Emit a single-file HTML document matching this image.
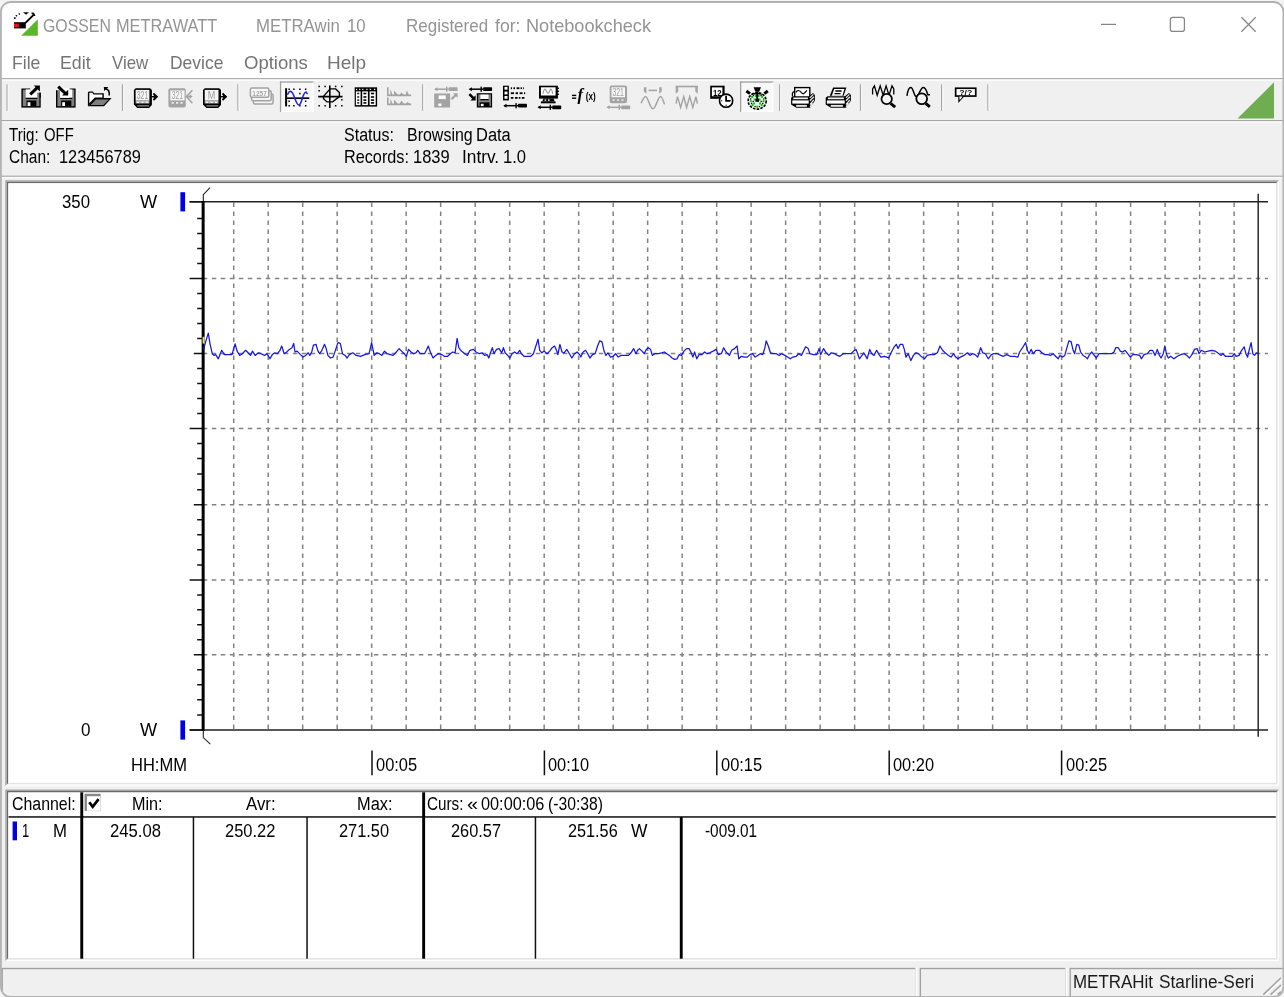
<!DOCTYPE html>
<html lang="en"><head><meta charset="utf-8"><title>GOSSEN METRAWATT METRAwin 10</title>
<style>
html,body{margin:0;padding:0}
body{width:1284px;height:997px;overflow:hidden;background:#f3f3f3;position:relative;font-family:"Liberation Sans",sans-serif}
.win{position:absolute;left:0;top:0;width:1284px;height:997px;overflow:hidden}
svg{display:block}
.abs{position:absolute}
span.t,span.ti,span.mn,span.sb{position:absolute;white-space:pre;line-height:1;transform-origin:0 0;font-family:"Liberation Sans",sans-serif}
.hl{position:absolute;height:0;left:0}
</style></head><body>
<div class="win">
<svg class="abs" style="left:0;top:0" width="1284" height="997" viewBox="0 0 1284 997">
<defs><clipPath id="wc"><rect x="0.5" y="1.5" width="1283.4" height="995.8" rx="10"/></clipPath></defs>
<g clip-path="url(#wc)">
<rect x="0" y="0" width="1284" height="997" fill="#f0f0f0"/>
<rect x="0" y="0" width="1284" height="78" fill="#fff"/>
<rect x="0" y="78.1" width="1284" height="1.3" fill="#a6a6a6"/>
<rect x="0" y="79.4" width="1284" height="1.3" fill="#fff"/>
<rect x="0" y="120.0" width="1284" height="1.3" fill="#a6a6a6"/>
<rect x="0" y="121.3" width="1284" height="1.3" fill="#fbfbfb"/>
<rect x="0" y="175.6" width="1284" height="1.3" fill="#acacac"/>
<rect x="0" y="176.9" width="1284" height="1.4" fill="#fafafa"/>
<rect x="5.3" y="180.2" width="1273.7" height="605.7" fill="#ffffff"/><path d="M5.3 180.2H1279.0L1277.5 181.7H6.8V784.4000000000001L5.3 785.9000000000001Z" fill="#a0a0a0"/><rect x="6.8" y="181.7" width="1270.7" height="602.7" fill="#e3e3e3"/><path d="M6.8 181.7H1277.5L1276.0 183.2H8.3V782.9000000000001L6.8 784.4000000000001Z" fill="#696969"/><rect x="8.3" y="183.2" width="1267.7" height="599.7" fill="#fff"/>
<rect x="5.3" y="789.4" width="1273.7" height="171.7" fill="#ffffff"/><path d="M5.3 789.4H1279.0L1277.5 790.9H6.8V959.5999999999999L5.3 961.0999999999999Z" fill="#a0a0a0"/><rect x="6.8" y="790.9" width="1270.7" height="168.7" fill="#e3e3e3"/><path d="M6.8 790.9H1277.5L1276.0 792.4H8.3V958.0999999999999L6.8 959.5999999999999Z" fill="#696969"/><rect x="8.3" y="792.4" width="1267.7" height="165.7" fill="#fff"/>
<rect x="8.5" y="816.1" width="1267.3" height="1.7" fill="#2c2c2c"/>
<rect x="80.3" y="792.3" width="2.9" height="166.4" fill="#000"/>
<rect x="422.2" y="792.3" width="2.9" height="166.4" fill="#000"/>
<rect x="679.8" y="817" width="2.9" height="141.7" fill="#000"/>
<rect x="192.7" y="817" width="1.5" height="141.7" fill="#111"/>
<rect x="306.3" y="817" width="1.5" height="141.7" fill="#111"/>
<rect x="534.7" y="817" width="1.5" height="141.7" fill="#111"/>
<rect x="12.6" y="821.5" width="4.4" height="18.8" fill="#0000e6"/>
<rect x="84.6" y="793.8" width="16.4" height="17.8" fill="#f1f1f1"/>
<rect x="84.6" y="793.8" width="16.0" height="17.0" fill="#868686"/>
<rect x="86.9" y="796.2" width="13.7" height="14.6" fill="#fff"/>
<path d="M89.3 802.2L92.7 806.8L98.6 799.2" stroke="#000" stroke-width="2.7" fill="none"/>
<rect x="1.5" y="967.8" width="915.5" height="30" fill="#fff"/><rect x="1.5" y="967.8" width="913.9" height="30" fill="#a0a0a0"/><rect x="2.9" y="969.2" width="912.5" height="30" fill="#f0f0f0"/>
<rect x="919.6" y="967.8" width="147.5" height="30" fill="#fff"/><rect x="919.6" y="967.8" width="145.9" height="30" fill="#a0a0a0"/><rect x="921.0" y="969.2" width="144.5" height="30" fill="#f0f0f0"/>
<rect x="1069.5" y="967.8" width="230" height="30" fill="#fff"/><rect x="1069.5" y="967.8" width="228.4" height="30" fill="#a0a0a0"/><rect x="1070.9" y="969.2" width="227.0" height="30" fill="#f0f0f0"/>
<path d="M1265.6 994.6L1283.2 977.8M1272.8 994.6L1283.2 985.2" stroke="#fff" stroke-width="1.6" fill="none"/>
<path d="M1263.3 994.6L1281 977.8M1270.5 994.6L1281 985.2M1277.6 994.6L1281 991.6" stroke="#a4a4a4" stroke-width="1.6" fill="none"/>
<path d="M1274 82.2V118.5H1237.5Z" fill="#70ad50"/>
</g>
<rect x="0.95" y="2.0" width="1282.45" height="994.8" rx="9.5" fill="none" stroke="#b2b2b2" stroke-width="1.8"/>
</svg>
<svg class="abs" style="left:8px;top:6px" width="40" height="36" viewBox="8 6 40 36">
<path d="M37.8 19.2V35.8H21.2Z" fill="#5cb62c"/>
<rect x="14" y="22.2" width="11.8" height="6.2" fill="#000"/>
<rect x="14" y="23.6" width="4.8" height="3.8" fill="#e8101c"/>
<path d="M25.2 23.2L33.6 14.8" stroke="#000" stroke-width="1.9" fill="none"/>
<path d="M31.6 13.2L35 15.8L33.6 12.9Z" fill="#000" stroke="#000" stroke-width="0.9"/>
<path d="M23 12.2H29L26 14.8Z" fill="#000"/>
<path d="M14.8 19V17.2M15.9 16.2L16.9 15.2M18.8 14.3L19.8 13.6" stroke="#000" stroke-width="1.5" fill="none"/>
</svg>
<svg class="abs" style="left:1090px;top:8px" width="180" height="32" viewBox="1090 8 180 32" fill="none" stroke="#868686" stroke-width="1.25">
<path d="M1101 24.4H1116"/>
<rect x="1170.4" y="17.4" width="14" height="14" rx="2.2"/>
<path d="M1241.4 17.3L1255.7 31.7M1255.7 17.3L1241.4 31.7"/>
</svg>
<svg class="abs" style="left:0;top:78px;will-change:transform" width="1000" height="44" viewBox="0 78 1000 44" font-family="Liberation Sans, sans-serif">
<rect x="6.5" y="84.3" width="1.2" height="26.5" fill="#a4a4a4"/><rect x="7.7" y="84.3" width="1.2" height="26.5" fill="#f8f8f8"/>
<rect x="121.9" y="84.3" width="1.2" height="26.5" fill="#a4a4a4"/><rect x="123.1" y="84.3" width="1.2" height="26.5" fill="#f8f8f8"/>
<rect x="237.3" y="84.3" width="1.2" height="26.5" fill="#a4a4a4"/><rect x="238.5" y="84.3" width="1.2" height="26.5" fill="#f8f8f8"/>
<rect x="422.1" y="84.3" width="1.2" height="26.5" fill="#a4a4a4"/><rect x="423.3" y="84.3" width="1.2" height="26.5" fill="#f8f8f8"/>
<rect x="779.0" y="84.3" width="1.2" height="26.5" fill="#a4a4a4"/><rect x="780.2" y="84.3" width="1.2" height="26.5" fill="#f8f8f8"/>
<rect x="859.9" y="84.3" width="1.2" height="26.5" fill="#a4a4a4"/><rect x="861.1" y="84.3" width="1.2" height="26.5" fill="#f8f8f8"/>
<rect x="941.0" y="84.3" width="1.2" height="26.5" fill="#a4a4a4"/><rect x="942.2" y="84.3" width="1.2" height="26.5" fill="#f8f8f8"/>
<rect x="987.3" y="84.3" width="1.2" height="26.5" fill="#a4a4a4"/><rect x="988.5" y="84.3" width="1.2" height="26.5" fill="#f8f8f8"/>
<rect x="279.9" y="81.4" width="33.6" height="30.6" fill="#f8f8f8"/><rect x="279.9" y="81.4" width="33.6" height="1.3" fill="#a0a0a0"/><rect x="279.9" y="81.4" width="1.3" height="30.6" fill="#a0a0a0"/><rect x="281.2" y="110.7" width="32.3" height="1.3" fill="#fff"/><rect x="312.2" y="82.7" width="1.3" height="29.3" fill="#fff"/>
<rect x="740.0" y="81.4" width="33.2" height="30.6" fill="#f8f8f8"/><rect x="740.0" y="81.4" width="33.2" height="1.3" fill="#a0a0a0"/><rect x="740.0" y="81.4" width="1.3" height="30.6" fill="#a0a0a0"/><rect x="741.3" y="110.7" width="31.9" height="1.3" fill="#fff"/><rect x="771.9" y="82.7" width="1.3" height="29.3" fill="#fff"/>
<rect x="21.4" y="88.5" width="19.3" height="19.1" fill="#000"/><rect x="22.8" y="89.7" width="16.6" height="16.5" fill="#808080"/><rect x="25.7" y="89.4" width="11.7" height="8.4" fill="#fff"/><rect x="25.7" y="97.8" width="11.7" height="1.2" fill="#000"/><rect x="26.5" y="100.5" width="9.9" height="6.0" fill="#000"/><rect x="27.6" y="102.2" width="2.8" height="3.8" fill="#fff"/>
<rect x="30.2" y="87.5" width="11.3" height="5.3" fill="#f0f0f0"/>
<rect x="37.6" y="92.8" width="1.8" height="5.2" fill="#808080"/><rect x="39.4" y="92.6" width="1.3" height="5.4" fill="#000"/>
<path d="M30.2 94.4L37.6 87.4" stroke="#000" stroke-width="3.0" fill="none" />
<path d="M33.8 85.4H39.9V91.6Z" fill="#000"/>
<rect x="56.0" y="88.5" width="19.6" height="19.1" fill="#000"/><rect x="57.4" y="89.7" width="16.9" height="16.5" fill="#808080"/><rect x="60.3" y="89.4" width="12.0" height="8.4" fill="#fff"/><rect x="60.3" y="97.8" width="12.0" height="1.2" fill="#000"/><rect x="61.1" y="100.5" width="10.2" height="6.0" fill="#000"/><rect x="62.2" y="102.2" width="2.8" height="3.8" fill="#fff"/>
<rect x="55.0" y="87.5" width="14.4" height="2.7" fill="#f0f0f0"/>
<rect x="60.2" y="88.0" width="9.2" height="9.8" fill="#fff"/>
<path d="M58.2 86.6L65.6 93.6" stroke="#000" stroke-width="3.0" fill="none" />
<path d="M68.2 89.8V95.6H62.0Z" fill="#000"/>
<path d="M87.9 106V92.4L89 91.4H93L94 93.2H103.8V98.5H95.4L88.4 106Z" fill="#000"/>
<path d="M89.3 103.2V93L89.6 92.8H92.4L93.4 94.6H102.4V97.4H94.8Z" fill="#fff"/>
<path d="M95.4 98.1H111.6L104 106.3H88Z" fill="#000"/>
<path d="M96 99.4H108.8L103.4 105.1H90.6Z" fill="#808080"/>
<path d="M109.2 95.6V92.4Q108.6 89.4 105.6 88.8" stroke="#000" stroke-width="1.5" fill="none" />
<path d="M103.8 87.0H108.4L104.2 91Z" fill="#000"/>
<path d="M135.70000000000002 88.2H150.1L151.9 90.0V105.10000000000001L149.1 107.9H137.3L133.9 104.50000000000001V90.0Z" fill="#000"/><rect x="135.6" y="89.9" width="13.8" height="10.8" fill="#f4f4f4"/><rect x="135.6" y="100.8" width="13.8" height="2.7" fill="#b4b4b4"/><rect x="136.9" y="101.7" width="2.0" height="1.2" fill="#fff"/><rect x="141.5" y="101.7" width="2.0" height="1.2" fill="#fff"/><rect x="145.9" y="101.7" width="2.0" height="1.2" fill="#fff"/><rect x="137.3" y="105.3" width="11.8" height="1.2" fill="#989898"/><text x="142.5" y="98.8" font-size="10.5" fill="#9c9c9c" text-anchor="middle" textLength="11.5" lengthAdjust="spacingAndGlyphs">321</text>
<path d="M151.7 96.7H156.2" stroke="#000" stroke-width="1.4" fill="none" /><path d="M154.0 92.7L158.2 96.7L154.0 100.7L152.79999999999998 99.5L155.2 96.7L152.79999999999998 93.9Z" fill="#000"/><path d="M153.79999999999998 94.10000000000001L157.6 96.7L153.79999999999998 99.3Z" fill="#000"/>
<rect x="168.4" y="88.2" width="17.4" height="19.3" rx="2.0" fill="#a3a3a3"/><rect x="170.3" y="90.4" width="14.3" height="10.0" fill="#f6f6f6"/><rect x="171.6" y="102.2" width="2.2" height="1.4" fill="#fff"/><rect x="176.0" y="102.2" width="2.2" height="1.4" fill="#fff"/><rect x="180.4" y="102.2" width="2.2" height="1.4" fill="#fff"/><text x="177.4" y="99.2" font-size="10.5" fill="#a0a0a0" text-anchor="middle" textLength="11.5" lengthAdjust="spacingAndGlyphs">321</text>
<path d="M192.4 90.2L186.4 96.6L192.4 103.2M186 96.6H191" stroke="#a3a3a3" stroke-width="1.5" fill="none" />
<path d="M189.6 94.2L192.6 96.6L189.6 99Z" fill="#a3a3a3"/>
<path d="M204.8 88.2H219.2L221.0 90.0V105.10000000000001L218.2 107.9H206.4L203.0 104.50000000000001V90.0Z" fill="#000"/><rect x="204.7" y="89.9" width="13.8" height="10.8" fill="#f4f4f4"/><rect x="204.7" y="100.8" width="13.8" height="2.7" fill="#b4b4b4"/><rect x="206.0" y="101.7" width="2.0" height="1.2" fill="#fff"/><rect x="210.6" y="101.7" width="2.0" height="1.2" fill="#fff"/><rect x="215.0" y="101.7" width="2.0" height="1.2" fill="#fff"/><rect x="206.4" y="105.3" width="11.8" height="1.2" fill="#989898"/><text x="211.6" y="98.8" font-size="10.5" fill="#9c9c9c" text-anchor="middle" textLength="7.5" lengthAdjust="spacingAndGlyphs">M</text>
<path d="M220.8 96.7H225.3" stroke="#000" stroke-width="1.4" fill="none" /><path d="M223.10000000000002 92.7L227.3 96.7L223.10000000000002 100.7L221.9 99.5L224.3 96.7L221.9 93.9Z" fill="#000"/><path d="M222.9 94.10000000000001L226.70000000000002 96.7L222.9 99.3Z" fill="#000"/>
<rect x="253.5" y="94.1" width="19.6" height="10" rx="1.5" fill="#f4f4f4" stroke="#a3a3a3" stroke-width="1.5"/>
<rect x="251.6" y="90.7" width="19.6" height="10" rx="1.5" fill="#f4f4f4" stroke="#a3a3a3" stroke-width="1.5"/>
<rect x="250.4" y="88" width="18.4" height="9.3" rx="1.5" fill="#f8f8f8" stroke="#a3a3a3" stroke-width="1.5"/>
<text x="259.6" y="95.6" font-size="8" fill="#a8a8a8" text-anchor="middle" textLength="14.6" lengthAdjust="spacingAndGlyphs" font-weight="bold">1257</text>
<rect x="288.4" y="88.5" width="1.5" height="1.5" fill="#000"/><rect x="293.1" y="88.5" width="1.5" height="1.5" fill="#000"/><rect x="299.1" y="88.5" width="1.5" height="1.5" fill="#000"/><rect x="304.9" y="88.5" width="1.5" height="1.5" fill="#000"/><rect x="299.1" y="92.8" width="1.5" height="1.5" fill="#000"/><rect x="288.4" y="100.5" width="1.5" height="1.5" fill="#000"/><rect x="304.9" y="100.5" width="1.5" height="1.5" fill="#000"/><rect x="288.4" y="105.0" width="1.5" height="1.5" fill="#000"/><rect x="293.1" y="105.0" width="1.5" height="1.5" fill="#000"/><rect x="299.1" y="105.0" width="1.5" height="1.5" fill="#000"/><rect x="304.9" y="105.0" width="1.5" height="1.5" fill="#000"/>
<path d="M286.1 88.2V106.4" stroke="#000" stroke-width="2.0" fill="none" /><path d="M286 98.2H309.3" stroke="#000" stroke-width="1.7" fill="none" />
<path d="M287.4 94.8Q289 91.2 290.6 91.3Q292.4 91.6 294.8 98.2Q297.2 104.9 298.9 105Q300.6 104.8 302.3 98.2Q304.4 92 306 92L307.6 93.9" stroke="#2020dd" stroke-width="1.5" fill="none" />
<rect x="318.4" y="85.7" width="1.5" height="1.5" fill="#000"/><rect x="324.4" y="85.7" width="1.5" height="1.5" fill="#000"/><rect x="334.9" y="85.7" width="1.5" height="1.5" fill="#000"/><rect x="341.1" y="85.7" width="1.5" height="1.5" fill="#000"/><rect x="318.4" y="90.0" width="1.5" height="1.5" fill="#000"/><rect x="341.1" y="99.0" width="1.5" height="1.5" fill="#000"/><rect x="318.4" y="105.0" width="1.5" height="1.5" fill="#000"/><rect x="324.4" y="105.0" width="1.5" height="1.5" fill="#000"/><rect x="334.9" y="105.0" width="1.5" height="1.5" fill="#000"/><rect x="341.1" y="105.0" width="1.5" height="1.5" fill="#000"/>
<path d="M318.2 96.6H342.5M329.8 85.4V107.9" stroke="#000" stroke-width="1.6" fill="none" />
<path d="M323.5 96.4L330.1 88.9H335.7L339.4 92.6V96.6L332.6 101.9H327L323.5 98.8Z" stroke="#000" stroke-width="1.35" fill="none" />
<rect x="354.7" y="87.3" width="22.4" height="19.3" fill="#000"/>
<rect x="355.9" y="91.4" width="4.7" height="13.7" fill="#fff"/>
<rect x="362.2" y="91.4" width="5.7" height="13.7" fill="#fff"/>
<rect x="369.6" y="91.4" width="6.1" height="13.7" fill="#fff"/>
<rect x="356.0" y="88.8" width="1.2" height="1.2" fill="#fff"/><rect x="359.1" y="88.8" width="1.2" height="1.2" fill="#fff"/><rect x="362.2" y="88.8" width="1.2" height="1.2" fill="#fff"/><rect x="366.3" y="88.8" width="1.2" height="1.2" fill="#fff"/><rect x="369.7" y="88.8" width="1.2" height="1.2" fill="#fff"/><rect x="374.1" y="88.8" width="1.2" height="1.2" fill="#fff"/>
<rect x="357.2" y="92.8" width="2.0" height="1.4" fill="#000"/><rect x="363.4" y="92.7" width="3.0" height="1.6" fill="#000"/><rect x="370.9" y="92.7" width="3.2" height="1.6" fill="#000"/>
<rect x="357.2" y="96.3" width="2.0" height="1.4" fill="#000"/><rect x="363.4" y="96.2" width="3.0" height="1.6" fill="#000"/><rect x="370.9" y="96.2" width="3.2" height="1.6" fill="#000"/>
<rect x="357.2" y="99.4" width="2.0" height="1.4" fill="#000"/><rect x="363.4" y="99.3" width="3.0" height="1.6" fill="#000"/><rect x="370.9" y="99.3" width="3.2" height="1.6" fill="#000"/>
<rect x="357.2" y="102.2" width="2.0" height="1.4" fill="#000"/><rect x="363.4" y="102.1" width="3.0" height="1.6" fill="#000"/><rect x="370.9" y="102.1" width="3.2" height="1.6" fill="#000"/>
<path d="M387.8 87.3V95.4H411.2M387.8 97.6V104.4H411.2" stroke="#a3a3a3" stroke-width="1.6" fill="none" />
<path d="M390.4 95V89L392.6 95ZM394 95V90.4L398 95ZM399.6 95L401.4 92.6L404 95ZM405.6 95L406.8 90.4L409 95Z" fill="#a3a3a3"/>
<path d="M390.4 104V98.6L392.6 104ZM394 104V99.6L398 104ZM399.6 104L401.4 100.6L404 104ZM405.4 104L407.4 102L410 104Z" fill="#a3a3a3"/>
<path d="M435.2 89.2H448.6" stroke="#a3a3a3" stroke-width="1.5" fill="none" /><path d="M434.2 89.2L437.4 87.2V91.2Z" fill="#a3a3a3"/><rect x="446.0" y="86.6" width="1.4" height="5.2" fill="#a3a3a3"/><rect x="448.6" y="87.3" width="9.0" height="3.8" rx="0.8" fill="#a3a3a3"/>
<rect x="434.2" y="93.5" width="15.9" height="14.0" fill="#a3a3a3"/>
<rect x="438.6" y="95.4" width="7.1" height="3.7" fill="#fff"/><rect x="438.3" y="103.5" width="3.1" height="2.5" fill="#fff"/>
<path d="M451.4 99.2L456 94.8" stroke="#a3a3a3" stroke-width="2.2" fill="none" /><path d="M453 93.2H457.6V97.8Z" fill="#a3a3a3"/>
<path d="M469.7 89.2H483.1" stroke="#000" stroke-width="1.5" fill="none" /><path d="M468.7 89.2L471.9 87.2V91.2Z" fill="#000"/><rect x="480.5" y="86.6" width="1.4" height="5.2" fill="#000"/><rect x="483.1" y="87.3" width="9.0" height="3.8" rx="0.8" fill="#000"/>
<rect x="476.8" y="93.2" width="15.3" height="14.3" fill="#000"/><rect x="478.2" y="94.4" width="12.7" height="11.8" fill="#808080"/>
<rect x="480.4" y="94.6" width="8.1" height="4.4" fill="#fff"/><rect x="480.4" y="99.0" width="8.1" height="1.2" fill="#000"/>
<rect x="479.6" y="102.4" width="9.8" height="4.2" fill="#000"/><rect x="480.8" y="103.8" width="2.8" height="2.3" fill="#fff"/>
<path d="M469.4 94.2L473.6 98.4" stroke="#000" stroke-width="2.6" fill="none" /><path d="M475.6 95.2V100.4H470.4Z" fill="#000"/>
<rect x="503.0" y="85.7" width="5.9" height="14.7" fill="#000"/>
<rect x="504.5" y="86.9" width="3.0" height="2.8" fill="#fff"/>
<rect x="504.5" y="91.6" width="3.0" height="2.8" fill="#fff"/>
<rect x="504.5" y="96.0" width="3.0" height="2.8" fill="#fff"/>
<rect x="510.8" y="87.3" width="1.2" height="1.8" fill="#000"/>
<rect x="513.4" y="87.3" width="1.6" height="1.8" fill="#000"/>
<rect x="516.6" y="87.3" width="2.8" height="1.8" fill="#000"/>
<rect x="520.6" y="87.3" width="1.4" height="1.8" fill="#000"/>
<rect x="523.2" y="87.3" width="0.8" height="1.8" fill="#000"/>
<rect x="510.8" y="92.3" width="3.2" height="1.8" fill="#000"/>
<rect x="515.6" y="92.3" width="2.4" height="1.8" fill="#000"/>
<rect x="519.6" y="92.3" width="3.0" height="1.8" fill="#000"/>
<rect x="524.0" y="92.3" width="1.2" height="1.8" fill="#000"/>
<rect x="510.8" y="97.0" width="2.6" height="1.8" fill="#000"/>
<rect x="515.0" y="97.0" width="2.6" height="1.8" fill="#000"/>
<rect x="518.8" y="97.0" width="1.6" height="1.8" fill="#000"/>
<rect x="521.8" y="97.0" width="2.6" height="1.8" fill="#000"/>
<path d="M504.3 105.7H518.0" stroke="#000" stroke-width="1.5" fill="none" /><path d="M503.3 105.7L506.5 103.7V107.7Z" fill="#000"/><rect x="515.4" y="103.1" width="1.4" height="5.2" fill="#000"/><rect x="518.0" y="103.8" width="9.0" height="3.8" rx="0.8" fill="#000"/>
<rect x="539.0" y="85.7" width="18.9" height="12.9" fill="#000"/>
<rect x="540.9" y="87.3" width="14.7" height="8.2" fill="#fff"/>
<path d="M543 93.6Q544.6 86 546.4 91T549.6 91T552.8 93.8" stroke="#9a9a9a" stroke-width="1.1" fill="none" />
<rect x="557.9" y="87.6" width="1.0" height="1.4" fill="#000"/><rect x="557.9" y="90.6" width="1.0" height="1.4" fill="#000"/><rect x="557.9" y="93.6" width="1.0" height="1.4" fill="#000"/>
<path d="M543.4 98.6H553.6L554.6 101.4H542.4Z" fill="#000"/><rect x="540.9" y="101.4" width="14.7" height="1.9" fill="#000"/>
<rect x="544.6" y="99.4" width="1.6" height="1.4" fill="#fff"/><rect x="548.0" y="99.4" width="1.6" height="1.4" fill="#fff"/>
<path d="M538.5 107.3H552.2" stroke="#000" stroke-width="1.5" fill="none" /><path d="M537.5 107.3L540.7 105.3V109.3Z" fill="#000"/><rect x="549.6" y="104.7" width="1.4" height="5.2" fill="#000"/><rect x="552.2" y="105.4" width="9.0" height="3.8" rx="0.8" fill="#000"/>
<rect x="572.0" y="94.7" width="4.2" height="1.4" fill="#000"/><rect x="572.0" y="97.5" width="4.2" height="1.4" fill="#000"/>
<text x="577.6" y="99.8" font-size="16.5" fill="#000" style="font-family:'Liberation Serif',serif;font-style:italic;font-weight:bold">f</text>
<text x="585.8" y="100.4" font-size="10.5" fill="#000" textLength="10" lengthAdjust="spacingAndGlyphs" font-weight="bold">(x)</text>
<rect x="609.7" y="85.4" width="17.4" height="17.8" rx="2.2" fill="#a3a3a3"/>
<rect x="611.5" y="87.3" width="13.5" height="10.0" fill="#f6f6f6"/>
<text x="618.2" y="96.0" font-size="10.5" fill="#a0a0a0" text-anchor="middle" textLength="11.5" lengthAdjust="spacingAndGlyphs">321</text>
<rect x="612.6" y="99.4" width="2.0" height="1.3" fill="#fff"/><rect x="617.0" y="99.4" width="2.0" height="1.3" fill="#fff"/><rect x="621.4" y="99.4" width="2.0" height="1.3" fill="#fff"/>
<path d="M607.5 107.3H621.2" stroke="#a3a3a3" stroke-width="1.5" fill="none" /><path d="M606.5 107.3L609.7 105.3V109.3Z" fill="#a3a3a3"/><rect x="618.6" y="104.7" width="1.4" height="5.2" fill="#a3a3a3"/><rect x="621.2" y="105.4" width="9.0" height="3.8" rx="0.8" fill="#a3a3a3"/>
<path d="M643.9 87.3H646.4V93.8L643.9 91.6ZM659.2 87.3H661.7V91.6L659.2 93.8Z" fill="#a3a3a3"/>
<path d="M648.6 90.4H657" stroke="#a3a3a3" stroke-width="1.5" fill="none" />
<path d="M641.1 103.2C643 99 644 96.4 645.5 96.4C648 96.4 650 108.8 652.9 108.8C655.8 108.8 658 96.4 660.5 96.4C662 96.4 663.2 100 664.5 104.4" stroke="#a3a3a3" stroke-width="1.5" fill="none" />
<path d="M675.7 86.5H697.8" stroke="#a3a3a3" stroke-width="1.6" fill="none" /><path d="M675.7 86H678.2V91.6L675.7 93.8ZM695.3 86H697.8V93.8L695.3 91.6Z" fill="#a3a3a3"/>
<path d="M676 103.6L677.5 96.6L680.6 107.5L683.8 96.6L686.6 107.5L689.7 96.6L692.8 107.5L695.9 96.6L697.4 103.6" stroke="#a3a3a3" stroke-width="1.4" fill="none" />
<rect x="710.2" y="85.7" width="14.4" height="13.1" fill="#000"/>
<rect x="711.9" y="87.4" width="10.5" height="8.8" fill="#fff"/>
<text x="717.2" y="95.6" font-size="9.5" fill="#000" text-anchor="middle" textLength="8.6" lengthAdjust="spacingAndGlyphs" font-weight="bold">12</text>
<circle cx="726.1" cy="100.7" r="6.6" fill="#fff" stroke="#000" stroke-width="1.6"/>
<path d="M726.1 95.8V100.9H730" stroke="#000" stroke-width="1.8" fill="none" />
<rect x="721.1" y="100.2" width="1.1" height="1.1" fill="#000"/><rect x="725.6" y="104.7" width="1.1" height="1.1" fill="#000"/><rect x="730.1" y="100.2" width="1.1" height="1.1" fill="#000"/>
<path d="M746.4 91L750 93.6M767.8 91L764.3 93.6" stroke="#000" stroke-width="3.0" fill="none" />
<path d="M753.6 87.2H761L759.2 91.8H755.4Z" fill="#000"/>
<ellipse cx="757.2" cy="100.9" rx="9.0" ry="8.2" fill="#e6f6e6" stroke="#000" stroke-width="1.6" stroke-dasharray="2.6 1.2"/>
<path d="M750.2 95.4Q757.2 89.6 764.2 95.4L761 94.6H753.4Z" fill="#000"/>
<rect x="751.2" y="96.0" width="1.9" height="1.9" fill="#18b418"/><rect x="761.2" y="96.0" width="1.9" height="1.9" fill="#18b418"/><rect x="749.8" y="100.2" width="1.9" height="1.9" fill="#18b418"/><rect x="762.6" y="100.2" width="1.9" height="1.9" fill="#18b418"/><rect x="751.6" y="104.2" width="1.9" height="1.9" fill="#18b418"/><rect x="760.8" y="104.2" width="1.9" height="1.9" fill="#18b418"/><rect x="756.2" y="105.8" width="1.9" height="1.9" fill="#18b418"/><rect x="753.8" y="98.5" width="1.9" height="1.9" fill="#18b418"/><rect x="758.6" y="98.5" width="1.9" height="1.9" fill="#18b418"/><rect x="753.2" y="102.5" width="1.9" height="1.9" fill="#18b418"/><rect x="759.2" y="102.5" width="1.9" height="1.9" fill="#18b418"/><rect x="755.0" y="95.0" width="1.9" height="1.9" fill="#18b418"/><rect x="757.6" y="95.0" width="1.9" height="1.9" fill="#18b418"/>
<rect x="750.0" y="98.3" width="1.3" height="1.3" fill="#000"/><rect x="763.1" y="98.3" width="1.3" height="1.3" fill="#000"/><rect x="751.0" y="102.8" width="1.3" height="1.3" fill="#000"/><rect x="762.1" y="102.8" width="1.3" height="1.3" fill="#000"/><rect x="754.4" y="105.9" width="1.3" height="1.3" fill="#000"/><rect x="758.8" y="105.9" width="1.3" height="1.3" fill="#000"/><rect x="752.8" y="94.9" width="1.3" height="1.3" fill="#000"/><rect x="760.4" y="94.9" width="1.3" height="1.3" fill="#000"/><rect x="752.6" y="100.8" width="1.3" height="1.3" fill="#000"/><rect x="760.6" y="100.8" width="1.3" height="1.3" fill="#000"/>
<path d="M757.2 91.6V100.4" stroke="#000" stroke-width="1.9" fill="none" /><rect x="755.4" y="98.8" width="3.6" height="3.0" fill="#000"/>
<rect x="794.0" y="86.9" width="16.5" height="10.1" fill="#000"/><rect x="795.4" y="88.3" width="13.7" height="8.7" fill="#fff"/><path d="M792.4 96.4V93.4Q792.6 92 794.4 91.6" stroke="#000" stroke-width="1.2" fill="none" />
<path d="M795.9 92.5Q797 90.3 798.4 90.5Q800 90.8 801.4 92.6Q802.6 94 803.4 93.8Q804.6 93.4 806.8 90.3" stroke="#000" stroke-width="1.2" fill="none" />
<path d="M793.0 96.3H808.9L813.0 92.89999999999999L814.9 95.1V100.6L810.1 107.8H796.3000000000001L791.1 104.39999999999999V97.7Z" fill="#000"/><rect x="793.3" y="97.5" width="14.6" height="1.7" fill="#f2f2f2"/><rect x="792.3" y="100.4" width="16.4" height="3.2" fill="#fff"/><rect x="796.1" y="104.9" width="10.8" height="1.9" fill="#e8e8e8"/><path d="M809.9 97.89999999999999L813.4 94.3M809.9 100.7L814.0 96.7M810.1 104.5L813.8000000000001 99.89999999999999M810.1 106.89999999999999L812.6 103.3" stroke="#f0f0f0" stroke-width="1.2" fill="none" />
<path d="M833.1 87.5H846.4L843.6 95.8H829.8Z" fill="#000"/><path d="M834.2 88.9H844.4L842.4 95.8H831.8Z" fill="#fff"/>
<path d="M835.4 91H841.6M834.4 93.6H840.6" stroke="#000" stroke-width="1.3" fill="none" />
<path d="M827.6 96.3H844.9L849.0 92.89999999999999L850.9 95.1V100.6L846.1 107.8H830.9000000000001L825.7 104.39999999999999V97.7Z" fill="#000"/><rect x="827.9" y="97.5" width="16.0" height="1.7" fill="#f2f2f2"/><rect x="826.9" y="100.4" width="17.8" height="3.2" fill="#fff"/><rect x="830.7" y="104.9" width="12.2" height="1.9" fill="#e8e8e8"/><path d="M845.9 97.89999999999999L849.4 94.3M845.9 100.7L850.0 96.7M846.1 104.5L849.8000000000001 99.89999999999999M846.1 106.89999999999999L848.6 103.3" stroke="#f0f0f0" stroke-width="1.2" fill="none" />
<path d="M872.6 94.4V89L874.4 85.9L877.2 95.3L880.2 85.9L883.2 95.3L886.1 85.9L889 95.3L892 85.9L893.8 89V94.4" stroke="#000" stroke-width="1.3" fill="none" />
<circle cx="886.7" cy="99" r="5.2" fill="#f4f4f4" stroke="#000" stroke-width="1.8"/>
<path d="M890.6 103.4L895.2 107.2" stroke="#000" stroke-width="3.0" fill="none" />
<path d="M907 95.8C907.6 91 909 87.4 910.8 87.4C913.4 87.4 914 96.6 916.4 96.6C918.8 96.6 920.4 87.4 923.3 87.4C925.6 87.4 926.8 91 927.8 94.8H930" stroke="#000" stroke-width="1.5" fill="none" />
<circle cx="921.7" cy="98.7" r="5.4" fill="#f4f4f4" stroke="#000" stroke-width="1.8"/>
<path d="M925.8 103.4L929.8 106.8" stroke="#000" stroke-width="3.0" fill="none" />
<path d="M957.5 96H958.3V103L964.6 96Z" fill="#000"/>
<rect x="954.8" y="87.4" width="21.8" height="9.5" fill="#000"/><rect x="956.5" y="89.1" width="18.4" height="6.1" fill="#fff"/>
<path d="M959.3 96.6L959.7 100.2L962.6 96.6Z" fill="#fff"/>
<text x="965.8" y="94.9" font-size="7.6" fill="#000" text-anchor="middle" textLength="13" lengthAdjust="spacingAndGlyphs" font-weight="bold">?/?</text>
</svg>
<svg class="chart" width="1284" height="997" viewBox="0 0 1284 997" style="position:absolute;left:0;top:0">
<path d="M233.70 202.4V729.5M268.20 202.4V729.5M302.69 202.4V729.5M337.19 202.4V729.5M371.69 202.4V729.5M406.19 202.4V729.5M440.68 202.4V729.5M475.18 202.4V729.5M509.68 202.4V729.5M544.17 202.4V729.5M578.67 202.4V729.5M613.17 202.4V729.5M647.66 202.4V729.5M682.16 202.4V729.5M716.66 202.4V729.5M751.15 202.4V729.5M785.65 202.4V729.5M820.15 202.4V729.5M854.65 202.4V729.5M889.14 202.4V729.5M923.64 202.4V729.5M958.14 202.4V729.5M992.63 202.4V729.5M1027.13 202.4V729.5M1061.63 202.4V729.5M1096.12 202.4V729.5M1130.62 202.4V729.5M1165.12 202.4V729.5M1199.62 202.4V729.5M1234.11 202.4V729.5" stroke="#828282" stroke-width="1.5" stroke-dasharray="4.5 4.5" fill="none"/>
<path d="M202.8 278.40H1268M202.8 353.40H1268M202.8 428.40H1268M202.8 504.80H1268M202.8 579.90H1268M202.8 654.80H1268" stroke="#828282" stroke-width="1.5" stroke-dasharray="4.5 4.5" fill="none"/>
<path d="M189.6 201.7H1268M189.6 730.0H1268" stroke="#222" stroke-width="1.5" fill="none"/>
<path d="M1258.2 193.8V736.8" stroke="#2a2a2a" stroke-width="1.5" fill="none"/>
<path d="M189.6 201.70H203M189.6 278.40H203M193.8 353.40H203M189.6 428.40H203M193.8 504.80H203M189.6 579.90H203M193.8 654.80H203M189.6 729.90H203M197.2 218.40H203M197.2 233.40H203M197.2 248.40H203M197.2 263.40H203M197.2 293.40H203M197.2 308.40H203M197.2 323.40H203M197.2 338.40H203M197.2 368.40H203M197.2 383.40H203M197.2 398.40H203M197.2 413.40H203M197.2 443.40H203M197.2 458.40H203M197.2 474.00H203M197.2 489.80H203M197.2 519.82H203M197.2 534.84H203M197.2 549.86H203M197.2 564.88H203M197.2 594.88H203M197.2 609.86H203M197.2 624.84H203M197.2 639.82H203M197.2 669.82H203M197.2 684.84H203M197.2 699.86H203M197.2 714.88H203" stroke="#111" stroke-width="1.5" fill="none"/>
<path d="M203.15 201.1V730.7" stroke="#000" stroke-width="3" fill="none"/>
<path d="M203.3 201V194.6L210 187.6M203.3 731V737.6L210.3 744.2" stroke="#222" stroke-width="1.1" fill="none"/>
<rect x="180.4" y="192.2" width="4.7" height="19.2" fill="#0000e6"/>
<rect x="180.4" y="720.4" width="4.7" height="19.2" fill="#0000e6"/>
<path d="M203.7 349.4 L205.4 342.6 L208.3 333.1 L210.1 344.3 L212.3 353.7 L214.0 355.4 L215.7 354.6 L218.3 358.8 L220.0 354.6 L221.7 350.3 L224.3 354.6 L226.8 354.6 L232.0 354.6 L235.1 343.9 L237.1 351.1 L239.7 355.4 L242.3 353.7 L245.7 350.3 L247.4 352.0 L250.5 355.4 L252.5 351.1 L255.1 355.4 L258.5 352.8 L261.1 353.7 L264.5 355.4 L267.1 353.7 L270.0 358.8 L272.3 354.6 L274.8 352.8 L277.4 353.7 L280.0 350.3 L281.7 346.0 L284.2 353.7 L286.8 352.0 L289.4 349.4 L292.0 347.7 L293.7 343.4 L295.0 352.0 L297.1 351.1 L300.5 354.6 L303.1 357.1 L305.7 355.4 L308.2 352.8 L309.9 355.4 L311.7 352.0 L313.4 345.1 L315.9 344.3 L318.0 351.1 L319.7 353.7 L321.9 350.3 L324.5 344.3 L325.9 347.7 L327.9 355.4 L330.5 358.0 L333.1 357.1 L335.7 349.4 L337.9 342.6 L340.3 343.4 L342.5 353.7 L345.1 355.4 L347.1 358.0 L349.4 354.6 L352.8 352.8 L356.2 355.4 L360.5 356.3 L364.8 354.6 L369.1 353.7 L371.6 342.6 L374.2 355.4 L376.8 352.8 L379.3 353.7 L381.9 355.4 L384.5 351.1 L387.1 353.7 L390.5 354.6 L393.1 355.4 L395.6 352.8 L399.1 348.6 L401.6 351.1 L404.2 353.7 L406.4 356.3 L408.5 349.4 L411.0 352.0 L413.6 353.7 L416.0 352.8 L417.7 350.3 L420.3 353.7 L424.6 353.7 L426.3 350.3 L428.3 346.0 L430.6 352.8 L433.1 358.0 L435.7 355.4 L438.3 353.7 L441.7 354.6 L444.3 356.3 L447.7 356.3 L450.3 353.7 L452.8 352.0 L455.1 352.8 L457.1 338.3 L458.8 347.7 L461.4 351.1 L464.8 353.7 L467.4 355.4 L470.0 350.3 L473.4 349.4 L476.0 352.0 L479.4 353.7 L482.0 352.8 L484.5 355.4 L487.1 354.6 L488.8 358.0 L490.5 352.8 L492.3 347.7 L494.0 353.7 L496.5 349.4 L499.1 348.6 L501.7 352.8 L503.4 347.7 L505.1 352.8 L507.7 355.4 L509.9 358.0 L512.0 353.7 L514.5 352.0 L517.1 353.7 L519.7 350.3 L521.4 353.7 L524.0 356.3 L527.4 356.3 L530.8 356.3 L533.4 353.7 L535.9 346.0 L538.0 339.1 L539.7 350.3 L541.9 352.8 L544.2 351.1 L547.1 353.7 L549.7 351.1 L552.2 347.7 L554.5 346.0 L556.5 350.3 L557.9 354.6 L559.9 344.3 L562.0 352.0 L564.2 352.8 L566.8 349.4 L569.4 353.7 L571.9 358.0 L574.5 353.7 L577.1 352.0 L579.6 354.6 L580.8 357.1 L583.1 352.0 L585.6 350.3 L588.2 354.6 L589.9 358.0 L592.5 354.6 L595.1 353.7 L597.6 346.0 L599.7 340.8 L601.9 341.7 L604.1 351.1 L605.9 355.4 L607.9 352.8 L610.5 357.1 L613.1 356.3 L615.6 353.7 L618.2 357.1 L620.8 355.4 L624.2 355.4 L628.5 355.4 L631.0 352.8 L633.6 348.6 L636.0 353.7 L637.7 350.3 L639.4 348.6 L642.0 351.1 L644.2 353.7 L646.3 349.4 L648.3 347.7 L650.6 349.4 L652.3 355.4 L654.8 353.7 L658.3 353.7 L661.7 352.8 L664.3 352.0 L666.8 353.7 L669.4 355.4 L672.0 358.0 L674.6 359.4 L677.1 358.8 L679.2 354.6 L681.4 355.4 L684.0 351.1 L686.5 348.6 L689.1 348.6 L691.2 352.8 L692.9 357.1 L694.6 352.0 L696.8 358.8 L699.1 354.6 L702.0 354.6 L704.5 352.0 L707.1 353.7 L709.7 352.8 L713.1 351.1 L716.2 349.4 L718.2 354.6 L721.3 353.7 L723.7 347.7 L726.0 352.0 L729.4 355.4 L731.6 350.3 L734.5 348.6 L737.1 346.0 L738.8 358.8 L741.4 356.3 L744.8 357.1 L747.4 357.1 L749.9 354.6 L752.5 353.7 L755.1 357.1 L757.7 355.4 L760.2 353.7 L762.8 354.6 L764.9 347.7 L766.2 340.8 L768.3 346.0 L770.5 352.8 L773.1 353.7 L776.5 353.7 L779.1 355.4 L781.6 353.7 L785.1 355.4 L787.6 357.1 L790.2 358.8 L792.8 357.1 L796.2 356.3 L798.8 353.7 L801.4 355.4 L803.9 350.3 L805.6 346.8 L808.2 348.6 L809.9 353.7 L813.3 354.6 L816.8 354.6 L819.0 348.6 L820.7 354.6 L823.6 348.6 L826.2 352.8 L828.8 355.4 L831.3 352.8 L834.8 353.7 L837.3 355.4 L839.9 356.3 L843.3 353.7 L846.8 353.7 L851.0 353.7 L853.6 351.1 L856.0 349.4 L857.7 353.7 L859.4 358.8 L862.0 355.4 L863.7 352.8 L865.4 355.4 L867.1 358.8 L869.7 349.4 L871.8 353.7 L874.0 355.4 L876.6 350.3 L879.1 354.6 L880.8 357.1 L884.3 356.3 L886.8 357.1 L888.6 358.0 L891.1 352.8 L893.7 347.7 L896.3 344.3 L898.0 348.6 L900.2 344.3 L902.6 344.3 L904.3 349.4 L906.0 357.1 L908.3 353.7 L910.8 360.6 L913.4 355.4 L916.0 352.8 L918.5 353.7 L922.0 357.1 L924.5 358.8 L927.1 355.4 L930.5 354.6 L934.0 354.6 L937.4 352.8 L940.0 346.0 L942.5 350.3 L945.1 352.8 L948.5 355.4 L951.1 357.1 L953.7 353.7 L955.7 357.1 L958.0 358.8 L960.5 357.1 L964.0 355.4 L967.4 352.8 L969.9 355.4 L972.5 353.7 L975.1 354.6 L977.7 357.1 L980.7 347.7 L982.8 352.8 L985.4 353.7 L988.3 358.8 L991.4 354.6 L993.9 353.7 L997.4 353.7 L1000.8 355.4 L1003.4 356.3 L1006.8 354.6 L1010.2 356.3 L1014.5 356.3 L1017.9 357.1 L1019.6 352.0 L1023.1 346.8 L1025.6 342.6 L1027.4 350.3 L1029.1 353.7 L1031.1 349.4 L1033.3 353.7 L1035.9 350.3 L1039.3 350.3 L1041.9 352.8 L1044.5 354.6 L1047.9 354.6 L1050.5 355.4 L1053.1 353.7 L1055.6 356.3 L1058.2 358.8 L1060.0 355.4 L1062.6 357.1 L1064.8 355.4 L1066.9 347.7 L1068.9 340.8 L1071.1 341.7 L1072.9 349.4 L1074.6 353.7 L1076.8 344.3 L1078.8 345.1 L1080.6 352.0 L1083.1 355.4 L1085.7 357.1 L1087.4 358.8 L1089.5 354.6 L1091.7 352.0 L1094.3 355.4 L1096.3 358.0 L1099.1 353.7 L1102.8 353.7 L1107.1 353.7 L1111.4 353.7 L1114.0 352.0 L1115.7 347.7 L1118.3 347.7 L1120.3 351.1 L1122.5 352.0 L1125.1 350.3 L1127.7 353.7 L1130.3 357.1 L1132.8 354.6 L1136.3 354.6 L1139.7 355.4 L1141.4 358.8 L1144.0 354.6 L1147.4 353.7 L1150.0 350.3 L1152.5 350.3 L1155.1 355.4 L1157.3 349.4 L1159.4 355.4 L1161.1 358.0 L1163.2 353.7 L1164.9 346.0 L1166.6 354.6 L1168.3 358.0 L1170.5 356.3 L1173.9 358.8 L1177.4 356.3 L1180.8 354.6 L1184.2 353.7 L1186.8 355.4 L1189.4 358.0 L1191.9 354.6 L1194.5 349.4 L1197.1 348.6 L1199.1 353.7 L1201.4 350.3 L1204.8 352.0 L1208.2 351.1 L1211.6 350.3 L1215.1 351.1 L1217.6 352.8 L1221.1 355.4 L1222.8 353.7 L1225.4 356.3 L1228.8 356.3 L1232.2 356.3 L1234.4 353.7 L1236.1 356.3 L1239.1 355.4 L1241.6 350.3 L1244.2 346.8 L1245.9 353.7 L1247.6 357.1 L1249.3 349.4 L1251.1 342.6 L1252.8 353.7 L1254.5 355.4 L1256.2 352.8 L1258.4 353.7" stroke="#1818dc" stroke-width="1.25" fill="none" stroke-linejoin="round"/>
<rect x="202.6" y="336.8" width="2" height="6.8" fill="#e8e060"/>
<path d="M372.0 750.6V775.2M544.4 750.6V775.2M716.8 750.6V775.2M889.2 750.6V775.2M1061.6 750.6V775.2" stroke="#111" stroke-width="1.5" fill="none"/>
</svg>
<div class="abs txt" style="left:0;top:0;width:1284px;height:997px;will-change:transform"><span class="ti" style="left:42.60px;top:17.10px;font-size:18.55px;color:#949494;transform:scaleX(0.8554)">GOSSEN</span>
<span class="ti" style="left:115.67px;top:17.10px;font-size:18.55px;color:#949494;transform:scaleX(0.8825)">METRAWATT</span>
<span class="ti" style="left:255.51px;top:17.10px;font-size:18.55px;color:#949494;transform:scaleX(0.9069)">METRAwin</span>
<span class="ti" style="left:346.63px;top:17.10px;font-size:18.55px;color:#949494;transform:scaleX(0.9095)">10</span>
<span class="ti" style="left:405.70px;top:17.10px;font-size:18.55px;color:#949494;transform:scaleX(0.9159)">Registered</span>
<span class="ti" style="left:494.55px;top:17.10px;font-size:18.55px;color:#949494;transform:scaleX(0.9522)">for:</span>
<span class="ti" style="left:525.63px;top:17.10px;font-size:18.55px;color:#949494;transform:scaleX(0.9782)">Notebookcheck</span>
<span class="mn" style="left:11.64px;top:54.00px;font-size:18.55px;color:#747474;transform:scaleX(0.9494)">File</span>
<span class="mn" style="left:59.74px;top:54.00px;font-size:18.55px;color:#747474;transform:scaleX(0.9572)">Edit</span>
<span class="mn" style="left:111.50px;top:54.00px;font-size:18.55px;color:#747474;transform:scaleX(0.9114)">View</span>
<span class="mn" style="left:169.53px;top:54.00px;font-size:18.55px;color:#747474;transform:scaleX(0.9417)">Device</span>
<span class="mn" style="left:243.55px;top:54.00px;font-size:18.55px;color:#747474;transform:scaleX(1.0001)">Options</span>
<span class="mn" style="left:326.55px;top:54.00px;font-size:18.55px;color:#747474;transform:scaleX(1.0268)">Help</span>
<span class="t" style="left:8.60px;top:124.61px;font-size:19.13px;color:#000;transform:scaleX(0.7903)">Trig:</span>
<span class="t" style="left:43.50px;top:124.61px;font-size:19.13px;color:#000;transform:scaleX(0.7778)">OFF</span>
<span class="t" style="left:8.65px;top:147.11px;font-size:19.13px;color:#000;transform:scaleX(0.8105)">Chan:</span>
<span class="t" style="left:58.65px;top:147.11px;font-size:19.13px;color:#000;transform:scaleX(0.8559)">123456789</span>
<span class="t" style="left:343.50px;top:124.61px;font-size:19.13px;color:#000;transform:scaleX(0.8378)">Status:</span>
<span class="t" style="left:406.68px;top:124.61px;font-size:19.13px;color:#000;transform:scaleX(0.8361)">Browsing</span>
<span class="t" style="left:475.66px;top:124.61px;font-size:19.13px;color:#000;transform:scaleX(0.8608)">Data</span>
<span class="t" style="left:343.66px;top:147.11px;font-size:19.13px;color:#000;transform:scaleX(0.8494)">Records:</span>
<span class="t" style="left:412.65px;top:147.11px;font-size:19.13px;color:#000;transform:scaleX(0.8632)">1839</span>
<span class="t" style="left:461.58px;top:147.11px;font-size:19.13px;color:#000;transform:scaleX(0.9053)">Intrv.</span>
<span class="t" style="left:502.65px;top:147.11px;font-size:19.13px;color:#000;transform:scaleX(0.8704)">1.0</span>
<span class="t" style="left:61.80px;top:192.31px;font-size:19.13px;color:#000;transform:scaleX(0.8790)">350</span>
<span class="t" style="left:139.55px;top:192.31px;font-size:19.13px;color:#000;transform:scaleX(0.9524)">W</span>
<span class="t" style="left:80.60px;top:720.31px;font-size:19.13px;color:#000;transform:scaleX(0.8949)">0</span>
<span class="t" style="left:139.55px;top:720.31px;font-size:19.13px;color:#000;transform:scaleX(0.9524)">W</span>
<span class="t" style="left:130.65px;top:754.71px;font-size:19.13px;color:#000;transform:scaleX(0.8648)">HH:MM</span>
<span class="t" style="left:375.70px;top:754.71px;font-size:19.13px;color:#000;transform:scaleX(0.8601)">00:05</span>
<span class="t" style="left:547.60px;top:754.71px;font-size:19.13px;color:#000;transform:scaleX(0.8576)">00:10</span>
<span class="t" style="left:720.50px;top:754.71px;font-size:19.13px;color:#000;transform:scaleX(0.8601)">00:15</span>
<span class="t" style="left:892.65px;top:754.71px;font-size:19.13px;color:#000;transform:scaleX(0.8576)">00:20</span>
<span class="t" style="left:1065.55px;top:754.71px;font-size:19.13px;color:#000;transform:scaleX(0.8601)">00:25</span>
<span class="t" style="left:11.70px;top:794.31px;font-size:19.13px;color:#000;transform:scaleX(0.8311)">Channel:</span>
<span class="t" style="left:131.53px;top:794.31px;font-size:19.13px;color:#000;transform:scaleX(0.8470)">Min:</span>
<span class="t" style="left:245.70px;top:794.31px;font-size:19.13px;color:#000;transform:scaleX(0.8809)">Avr:</span>
<span class="t" style="left:356.51px;top:794.31px;font-size:19.13px;color:#000;transform:scaleX(0.8572)">Max:</span>
<span class="t" style="left:426.50px;top:794.31px;font-size:19.13px;color:#000;transform:scaleX(0.7976)">Curs:</span>
<span class="t" style="left:466.70px;top:794.31px;font-size:19.13px;color:#000;transform:scaleX(1.0419)">«</span>
<span class="t" style="left:480.50px;top:794.31px;font-size:19.13px;color:#000;transform:scaleX(0.8526)">00:00:06</span>
<span class="t" style="left:547.74px;top:794.31px;font-size:19.13px;color:#000;transform:scaleX(0.8218)">(-30:38)</span>
<span class="t" style="left:21.73px;top:821.01px;font-size:19.13px;color:#000;transform:scaleX(0.6825)">1</span>
<span class="t" style="left:52.70px;top:821.01px;font-size:19.13px;color:#000;transform:scaleX(0.8782)">M</span>
<span class="t" style="left:109.50px;top:821.01px;font-size:19.13px;color:#000;transform:scaleX(0.8708)">245.08</span>
<span class="t" style="left:224.55px;top:821.01px;font-size:19.13px;color:#000;transform:scaleX(0.8617)">250.22</span>
<span class="t" style="left:338.65px;top:821.01px;font-size:19.13px;color:#000;transform:scaleX(0.8564)">271.50</span>
<span class="t" style="left:450.65px;top:821.01px;font-size:19.13px;color:#000;transform:scaleX(0.8558)">260.57</span>
<span class="t" style="left:567.55px;top:821.01px;font-size:19.13px;color:#000;transform:scaleX(0.8499)">251.56</span>
<span class="t" style="left:630.55px;top:821.01px;font-size:19.13px;color:#000;transform:scaleX(0.9108)">W</span>
<span class="t" style="left:704.50px;top:821.01px;font-size:19.13px;color:#000;transform:scaleX(0.8023)">-009.01</span>
<span class="sb" style="left:1072.73px;top:973.14px;font-size:18.26px;color:#1a1a1a;transform:scaleX(0.9283)">METRAHit</span>
<span class="sb" style="left:1158.50px;top:973.14px;font-size:18.26px;color:#1a1a1a;transform:scaleX(0.9470)">Starline-Seri</span></div>
</div>
</body></html>
